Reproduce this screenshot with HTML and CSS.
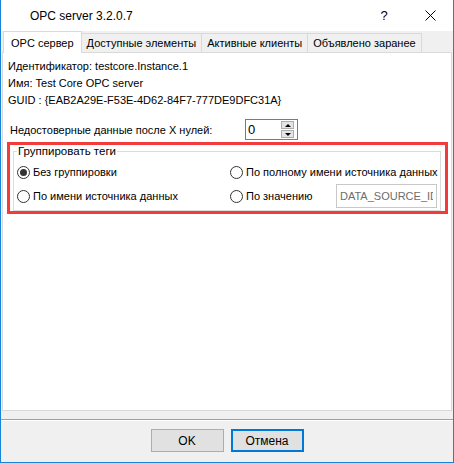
FILE: index.html
```html
<html>
<head>
    <link rel="stylesheet" href="styles.css">
</head>
<body>
<div class="window">
    <div class="titlebar">
        <div class="title">OPC server 3.2.0.7</div>
        <div class="tbtn">?</div>
        <div class="tbtn">
            <svg width="11" height="11" viewBox="0 0 11 11"><path d="M0.5 0.5 L10.5 10.5 M10.5 0.5 L0.5 10.5" stroke="#000" stroke-width="1" fill="none"/></svg>
        </div>
    </div>
    <div class="tabs">
        <div class="tab active">OPC сервер</div>
        <div class="tab">Доступные элементы</div>
        <div class="tab">Активные клиенты</div>
        <div class="tab">Объявлено заранее</div>
    </div>
    <div class="panel">
        <div class="info">
            <div>Идентификатор: testcore.Instance.1</div>
            <div>Имя: Test Core OPC server</div>
            <div>GUID : {EAB2A29E-F53E-4D62-84F7-777DE9DFC31A}</div>
        </div>
        <div class="spin-row">
            <div class="spin-label">Недостоверные данные после X нулей:</div>
            <div class="spin">
                <div class="spin-value">0</div>
                <div class="spin-btns">
                    <div class="spin-btn"><span class="arrow up"></span></div>
                    <div class="spin-btn"><span class="arrow down"></span></div>
                </div>
            </div>
        </div>
        <div class="highlight">
            <fieldset class="group">
                <legend>Группировать теги</legend>
                <div class="options">
                    <label class="option"><span class="radio checked"></span>Без группировки</label>
                    <label class="option"><span class="radio"></span>По полному имени источника данных</label>
                    <label class="option"><span class="radio"></span>По имени источника данных</label>
                    <div class="option">
                        <span class="radio"></span>По значению
                        <input class="field" type="text" value="DATA_SOURCE_ID" readonly>
                    </div>
                </div>
            </fieldset>
        </div>
    </div>
    <div class="footer">
        <div class="buttons">
            <button class="btn">OK</button>
            <button class="btn default">Отмена</button>
        </div>
    </div>
</div>
</body>
</html>
```

FILE: styles.css
```css
body {
    margin: 0;
    background: #fff;
}

.window {
    width: 454px;
    height: 463px;
    box-sizing: border-box;
    border: 1px solid #1883d7;
    border-top: none;
    background: #f0f0f0;
    display: flex;
    flex-direction: column;
    font-family: "Liberation Sans", Arial, sans-serif;
    font-size: 11px;
    color: #000;
}

.titlebar {
    height: 31px;
    background: #fff;
    display: flex;
    align-items: center;
}

.title {
    flex: 1;
    padding-left: 29px;
    font-size: 12px;
}

.tbtn {
    width: 46px;
    height: 31px;
    display: flex;
    align-items: center;
    justify-content: center;
    font-size: 13px;
}

.tabs {
    display: flex;
    align-items: flex-end;
    height: 21px;
    padding-left: 2px;
    position: relative;
    z-index: 1;
}

.tab {
    flex-shrink: 0;
    white-space: nowrap;
    height: 19px;
    box-sizing: border-box;
    padding: 0 5px;
    border: 1px solid #d9d9d9;
    border-bottom: none;
    margin-left: -1px;
    background: #f0f0f0;
    display: flex;
    align-items: center;
    font-size: 11px;
}

.tab.active {
    height: 22px;
    margin-bottom: -1px;
    margin-left: 0;
    background: #fff;
    padding: 0 7px;
}

.panel {
    height: 359px;
    box-sizing: border-box;
    margin: 0 1px;
    background: #fff;
    border: 1px solid #d9d9d9;
}

.info {
    padding: 5px 5px 0;
    line-height: 17px;
}

.spin-row {
    display: flex;
    align-items: center;
    margin-top: 10px;
    padding-left: 7px;
}

.spin-label {
    width: 235px;
}

.spin {
    width: 53px;
    height: 21px;
    box-sizing: border-box;
    border: 1px solid #7a7a7a;
    display: flex;
    align-items: center;
}

.spin-value {
    flex: 1;
    padding-left: 2px;
    font-size: 13px;
}

.spin-btns {
    display: flex;
    flex-direction: column;
    gap: 1px;
    margin-right: 3px;
}

.spin-btn {
    width: 13px;
    height: 8px;
    box-sizing: border-box;
    border: 1px solid #adadad;
    background: #e5e5e5;
    display: flex;
    align-items: center;
    justify-content: center;
}

.arrow {
    width: 0;
    height: 0;
    border-left: 3px solid transparent;
    border-right: 3px solid transparent;
}

.arrow.up {
    border-bottom: 3px solid #000;
}

.arrow.down {
    border-top: 3px solid #000;
}

.highlight {
    margin: 2px 0 0 4px;
    width: 441px;
    height: 72px;
    box-sizing: border-box;
    border: 3px solid #f23c3c;
}

.group {
    margin: 0 4px 0 3px;
    padding: 0 0 0 3px;
    height: 66px;
    box-sizing: border-box;
    border: 1px solid #dcdcdc;
}

.group legend {
    padding: 0 1px;
    margin-left: 0;
    font-size: 11.5px;
    line-height: 13px;
}

.options {
    display: grid;
    grid-template-columns: 213px 1fr;
    grid-auto-rows: 24px;
    align-items: center;
    margin-top: 2px;
}

.option {
    display: flex;
    align-items: center;
    white-space: nowrap;
    font-size: 11px;
}

.radio {
    flex-shrink: 0;
    width: 13px;
    height: 13px;
    box-sizing: border-box;
    border: 1px solid #333;
    border-radius: 50%;
    margin-right: 3px;
    display: flex;
    align-items: center;
    justify-content: center;
}

.radio.checked::after {
    content: "";
    width: 7px;
    height: 7px;
    border-radius: 50%;
    background: #333;
}

.field {
    width: 101px;
    height: 24px;
    box-sizing: border-box;
    margin-left: auto;
    margin-right: 3px;
    border: 1px solid #c8c8c8;
    padding: 0 3px;
    font-family: "Liberation Sans", Arial, sans-serif;
    font-size: 11px;
    color: #6d6d6d;
    outline: none;
}

.footer {
    flex: 1;
    padding-top: 8px;
}

.buttons {
    border-top: 1px solid #a0a0a0;
    box-shadow: inset 0 1px 0 #fff;
    display: flex;
    justify-content: center;
    gap: 7px;
    padding-top: 9px;
}

.btn {
    width: 73px;
    height: 23px;
    box-sizing: border-box;
    border: 1px solid #adadad;
    background: #e1e1e1;
    font-family: "Liberation Sans", Arial, sans-serif;
    font-size: 12px;
    color: #000;
    padding: 0;
}

.btn.default {
    border: 2px solid #0078d7;
}
```
